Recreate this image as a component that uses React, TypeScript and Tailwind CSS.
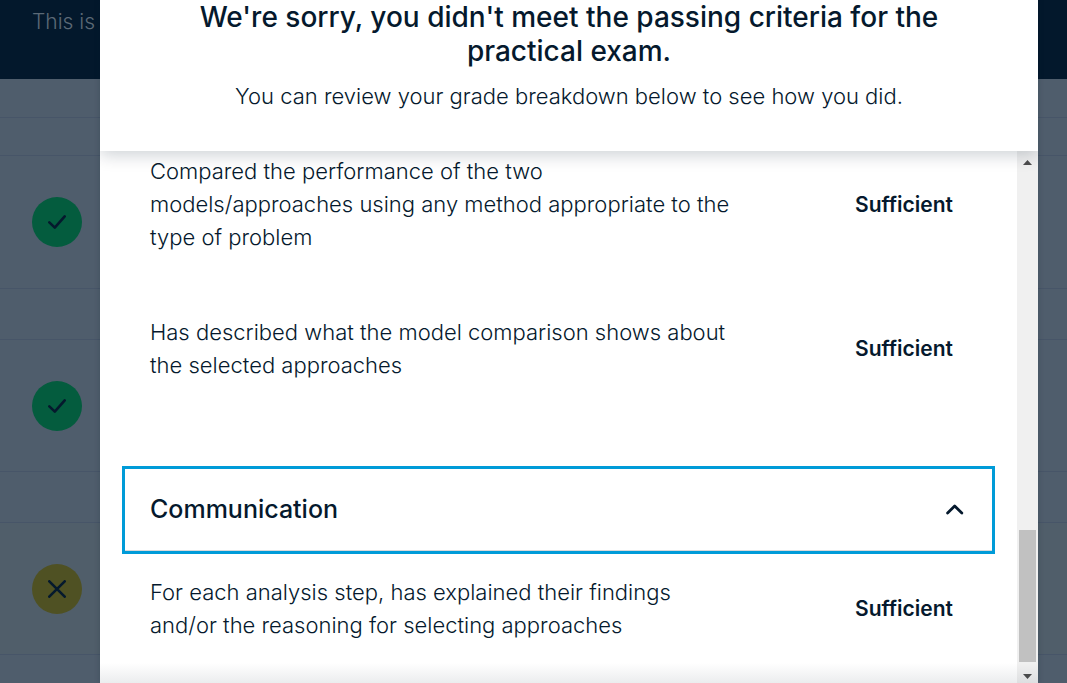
import React from "react";

type Status = "pass" | "fail";

const results: Status[] = ["pass", "pass", "fail"];

function StatusBadge({ status }: { status: Status }) {
  const pass = status === "pass";
  return (
    <span
      className={
        "flex h-[50px] w-[50px] items-center justify-center rounded-full " +
        (pass ? "bg-[#045c3e]" : "bg-[#4f5123]")
      }
    >
      <svg width="18" height="18" viewBox="0 0 18 18" fill="none" stroke="#05192d" strokeWidth="2.6" strokeLinecap="round" strokeLinejoin="round" aria-label={pass ? "Passed" : "Not passed"}>
        {pass ? <path d="M1.3 9.4 6.8 14.6 16.7 3.4" /> : <path d="M1.3 1.3 16.7 16.7M16.7 1.3 1.3 16.7" />}
      </svg>
    </span>
  );
}

function Criterion({ children, grade }: { children: React.ReactNode; grade: string }) {
  return (
    <div className="flex items-center justify-between pl-[50px] pr-[62px]">
      <p className="w-[600px] text-[22px] font-[350] leading-[33px]">{children}</p>
      <p className="w-[100px] text-[21px] font-semibold leading-8">{grade}</p>
    </div>
  );
}

export default function App() {
  return (
    <div className="relative h-screen overflow-hidden bg-[#4f5d6c] text-[#05192d] [font-family:Inter,sans-serif]">
      <div className="flex flex-col">
        <header className="h-[79px] bg-[#03182c] pl-8 pt-[6px]">
          <p className="text-[21px] font-[350] leading-8 text-[#5b6976]">This is</p>
        </header>
        <div className="h-[39px] border-b border-[#475568]" />
        {results.map((status, i) => (
          <section key={i}>
            <div className={(i === 0 ? "h-[38px]" : "h-[51px]") + " border-b border-[#475568]"} />
            <div
              className={
                "flex items-center border-b border-[#475568] pl-8 " +
                (i === 0 ? "h-[133px]" : "h-[132px]") +
                (status === "fail" ? " bg-[#505e6a]" : "")
              }
            >
              <StatusBadge status={status} />
            </div>
          </section>
        ))}
      </div>

      <div className="absolute inset-0 flex pl-[100px] pr-[29px]">
        <div role="dialog" aria-labelledby="dialog-title" className="flex min-w-0 flex-1 flex-col bg-white shadow-[0_0_6px_rgba(5,25,45,0.2)]">
          <div className="z-10 bg-white px-[50px] pb-[38px] text-center shadow-[0_4px_16px_rgba(5,25,45,0.2)] [clip-path:inset(0_0_-30px_0)]">
            <h2 id="dialog-title" className="text-[28px] font-medium leading-[34px]">
              We're sorry, you didn't meet the passing criteria for the<br />practical exam.
            </h2>
            <p className="mt-3 text-[22px] font-[350] leading-[33px]">
              You can review your grade breakdown below to see how you did.
            </p>
          </div>

          <div className="relative flex min-h-0 flex-1">
            <div className="min-w-0 flex-1 overflow-hidden pt-1">
              <Criterion grade="Sufficient">
                Compared the performance of the two<br />models/approaches using any method appropriate to the<br />type of problem
              </Criterion>
              <div className="mt-[62px]">
                <Criterion grade="Sufficient">
                  Has described what the model comparison shows about<br />the selected approaches
                </Criterion>
              </div>
              <div className="mb-[22px] ml-[22px] mr-[22px] mt-[84px]">
                <button type="button" aria-expanded="true" className="flex h-[88px] w-full items-center justify-between border-[3px] border-[#009bd8] pl-[25px] pr-[28px] text-left text-[25px] font-medium shadow-[inset_0_-1px_0_#d9d9d9]">
                  Communication
                  <svg width="18" height="18" viewBox="0 0 18 18" fill="none" stroke="currentColor" strokeWidth="2.8" strokeLinecap="round" strokeLinejoin="round" aria-hidden="true">
                    <path d="M1.6 12 8.7 5 15.8 12" />
                  </svg>
                </button>
              </div>
              <Criterion grade="Sufficient">
                For each analysis step, has explained their findings<br />and/or the reasoning for selecting approaches
              </Criterion>
            </div>

            <div className="flex w-[21px] flex-col items-center bg-[#f0f0f0]" aria-hidden="true">
              <svg className="mt-[9px]" width="9" height="5" viewBox="0 0 9 5" fill="#4d4d4d"><path d="M0 5 4.5 0 9 5Z" /></svg>
              <div className="flex-1" />
              <div className="h-[132px] w-[17px] bg-[#c1c1c1]" />
              <svg className="mb-1 mt-3" width="9" height="5" viewBox="0 0 9 5" fill="#4d4d4d"><path d="M0 0 4.5 5 9 0Z" /></svg>
            </div>
            <div className="pointer-events-none absolute inset-x-0 bottom-0 h-5 bg-linear-to-t from-[#05192d]/8 to-transparent" />
          </div>
        </div>
      </div>
    </div>
  );
}
